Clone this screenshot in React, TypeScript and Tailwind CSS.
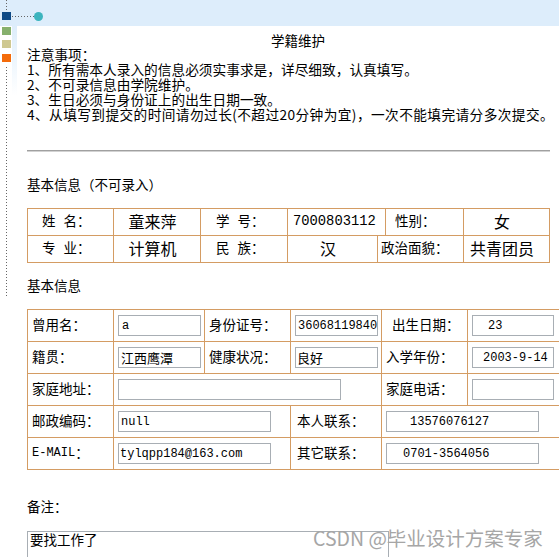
import React from "react";

const CJK = "font-['Noto_Sans_CJK_SC',sans-serif]";
const MONO = "font-['Liberation_Mono','Noto_Sans_CJK_SC',monospace]";

function Box({ cls, children }: { cls: string; children?: React.ReactNode }) {
  return (
    <div
      className={`h-[21px] border border-[#a8aeb4] bg-white flex items-center overflow-hidden whitespace-nowrap ${cls}`}
    >
      {children}
    </div>
  );
}

function Cell({ cls, children }: { cls: string; children?: React.ReactNode }) {
  return (
    <div className={`h-full border-r border-[#d49c63] flex items-center shrink-0 ${cls}`}>{children}</div>
  );
}

const lat = `${MONO} text-[12px]`;
const zh = "text-[13px]";

export default function App() {
  return (
    <div className={`relative w-[559px] h-[557px] overflow-hidden bg-white text-black ${CJK}`}>
      <div className="h-[26px] bg-[#ddedfb]" />
      <div className="flex">
        <div className="w-[12px] shrink-0" />
        <div className="w-[5px] shrink-0 h-[70px] bg-[linear-gradient(to_bottom,#ddedfb,#ffffff)]" />
        <div className="pl-[10px] flex flex-col">
          <div className="pt-[7px] h-[21px] leading-[14px] text-[13.5px] text-center w-[566px] pr-[24px] whitespace-nowrap">
            学籍维护
          </div>
          <div className="w-[523px] text-[13.7px] leading-[15px] whitespace-nowrap">
            <div className="h-[15px]">注意事项：</div>
            <div className="h-[15px]">1、所有需本人录入的信息必须实事求是，详尽细致，认真填写。</div>
            <div className="h-[15px]">2、不可录信息由学院维护。</div>
            <div className="h-[15px]">3、生日必须与身份证上的出生日期一致。</div>
            <div className="h-[15px] tracking-[0.4px]">
              4、从填写到提交的时间请勿过长(不超过20分钟为宜)，一次不能填完请分多次提交。
            </div>
          </div>
          <div className="mt-[28px] w-[523px] h-0 border-t border-b border-t-[#a0a0a0] border-b-[#d2d2d2]" />
          <div className="mt-[24px] h-[16px] leading-[16px] text-[13.5px]">基本信息（不可录入）</div>

          {/* table 1 */}
          <div className="mt-[16px] w-[523px] border-l border-t border-[#d49c63] text-[13.5px]">
            <div className="flex h-[27px] border-b border-[#d49c63]">
              <Cell cls="w-[86px] pl-[14px] pb-[3px]">
                姓<span className="inline-block w-[8px]" />名：
              </Cell>
              <Cell cls="w-[87px] justify-center pr-[9px] pb-[3px] text-[16px]">童来萍</Cell>
              <Cell cls="w-[87px] pl-[15px] pb-[3px]">
                学<span className="inline-block w-[8px]" />号：
              </Cell>
              <Cell cls={`w-[98px] pl-[5px] ${MONO} text-[13.8px]`}>7000803112</Cell>
              <Cell cls="w-[78px] pl-[9px] pb-[3px]">性别：</Cell>
              <Cell cls="w-[86px] justify-center pr-[9px] pb-[3px] text-[16px]">女</Cell>
            </div>
            <div className="flex h-[27px] border-b border-[#d49c63]">
              <Cell cls="w-[86px] pl-[14px] pb-[3px]">
                专<span className="inline-block w-[8px]" />业：
              </Cell>
              <Cell cls="w-[87px] justify-center pr-[9px] pb-[3px] text-[16px]">计算机</Cell>
              <Cell cls="w-[87px] pl-[15px] pb-[3px]">
                民<span className="inline-block w-[8px]" />族：
              </Cell>
              <Cell cls="w-[90px] justify-center pr-[9px] pb-[3px] text-[16px]">汉</Cell>
              <Cell cls="w-[86px] pl-[3px] pb-[3px]">政治面貌：</Cell>
              <Cell cls="w-[86px] justify-center pr-[9px] pb-[3px] text-[16px]">共青团员</Cell>
            </div>
          </div>

          <div className="mt-[14px] h-[16px] leading-[16px] text-[13.5px]">基本信息</div>

          {/* table 2 */}
          <div className="mt-[16px] w-[600px] border-l border-t border-[#d49c63] text-[13.5px]">
            <div className="flex h-[32px] border-b border-[#d49c63]">
              <Cell cls="w-[86px] pl-[4px] pb-[3px]">曾用名：</Cell>
              <Cell cls="w-[91px] pl-[4px]">
                <Box cls="w-[83px] pl-[3px]">
                  <span className={lat}>a</span>
                </Box>
              </Cell>
              <Cell cls="w-[86px] pl-[4px] pb-[3px]">身份证号：</Cell>
              <Cell cls="w-[91px] pl-[4px]">
                <Box cls="w-[83px] pl-[2px]">
                  <span className={lat}>36068119840</span>
                </Box>
              </Cell>
              <Cell cls="w-[86px] pl-[10px] pb-[3px]">出生日期：</Cell>
              <Cell cls="flex-1 pl-[4px]">
                <Box cls="w-[82px] pl-[15px]">
                  <span className={lat}>23</span>
                </Box>
              </Cell>
            </div>
            <div className="flex h-[32px] border-b border-[#d49c63]">
              <Cell cls="w-[86px] pl-[4px] pb-[3px]">籍贯：</Cell>
              <Cell cls="w-[91px] pl-[4px]">
                <Box cls="w-[83px] pl-[2px]">
                  <span className={zh}>江西鹰潭</span>
                </Box>
              </Cell>
              <Cell cls="w-[86px] pl-[4px] pb-[3px]">健康状况：</Cell>
              <Cell cls="w-[91px] pl-[4px]">
                <Box cls="w-[83px] pl-[1px]">
                  <span className={zh}>良好</span>
                </Box>
              </Cell>
              <Cell cls="w-[86px] pl-[4px] pb-[3px]">入学年份：</Cell>
              <Cell cls="flex-1 pl-[4px]">
                <Box cls="w-[82px] pl-[10px]">
                  <span className={lat}>2003-9-14</span>
                </Box>
              </Cell>
            </div>
            <div className="flex h-[32px] border-b border-[#d49c63]">
              <Cell cls="w-[86px] pl-[4px] pb-[3px]">家庭地址：</Cell>
              <Cell cls="w-[268px] pl-[4px]">
                <Box cls="w-[223px]" />
              </Cell>
              <Cell cls="w-[86px] pl-[4px] pb-[3px]">家庭电话：</Cell>
              <Cell cls="flex-1 pl-[4px]">
                <Box cls="w-[82px]" />
              </Cell>
            </div>
            <div className="flex h-[32px] border-b border-[#d49c63]">
              <Cell cls="w-[86px] pl-[4px] pb-[3px]">邮政编码：</Cell>
              <Cell cls="w-[177px] pl-[4px]">
                <Box cls="w-[153px] pl-[2px]">
                  <span className={lat}>null</span>
                </Box>
              </Cell>
              <Cell cls="w-[91px] pl-[6px] pb-[3px]">本人联系：</Cell>
              <Cell cls="flex-1 pl-[4px]">
                <Box cls="w-[153px] pl-[23px]">
                  <span className={lat}>13576076127</span>
                </Box>
              </Cell>
            </div>
            <div className="flex h-[32px] border-b border-[#d49c63]">
              <Cell cls="w-[86px] pl-[4px] pb-[2px]">
                <span className={lat}>E-MAIL</span>：
              </Cell>
              <Cell cls="w-[177px] pl-[4px]">
                <Box cls="w-[153px] pl-[1px]">
                  <span className={lat}>tylqpp184@163.com</span>
                </Box>
              </Cell>
              <Cell cls="w-[91px] pl-[6px] pb-[3px]">其它联系：</Cell>
              <Cell cls="flex-1 pl-[4px]">
                <Box cls="w-[153px] pl-[16px]">
                  <span className={lat}>0701-3564056</span>
                </Box>
              </Cell>
            </div>
          </div>

          <div className="mt-[28px] h-[16px] leading-[16px] text-[13.5px]">备注：</div>
          <div className="mt-[17px] w-[362px] h-[40px] border border-[#a8aeb4] pl-[2px] text-[13.5px] leading-[15px]">
            要找工作了
          </div>
        </div>
      </div>

      {/* tree decoration */}
      <div className="absolute left-[6px] top-0 w-[1px] h-[11px] bg-[linear-gradient(to_bottom,#666_1px,transparent_1px)] bg-[length:1px_3px]" />
      <div className="absolute left-[2px] top-[12px] w-[9px] h-[8px] bg-[#0d4a87]" />
      <div className="absolute left-[12px] top-[16px] w-[22px] h-[1px] bg-[linear-gradient(to_right,#666_1px,transparent_1px)] bg-[length:3px_1px]" />
      <div className="absolute left-[34px] top-[12px] w-[9px] h-[9px] rounded-full bg-[#3cb4be]" />
      <div className="absolute left-[2px] top-[27px] w-[9px] h-[8px] bg-[#86b06d]" />
      <div className="absolute left-[2px] top-[40px] w-[9px] h-[8px] bg-[#cfc891]" />
      <div className="absolute left-[2px] top-[54px] w-[9px] h-[8px] bg-[#f46b0a]" />
      <div className="absolute left-[6px] top-[67px] w-[1px] h-[230px] bg-[linear-gradient(to_bottom,#666_1px,transparent_1px)] bg-[length:1px_3px]" />

      {/* watermark */}
      <div className="absolute left-[313px] top-[525px] text-[19.5px] leading-[26px] text-[#a6a6a6] whitespace-nowrap">
        CSDN @毕业设计方案专家
      </div>
    </div>
  );
}
